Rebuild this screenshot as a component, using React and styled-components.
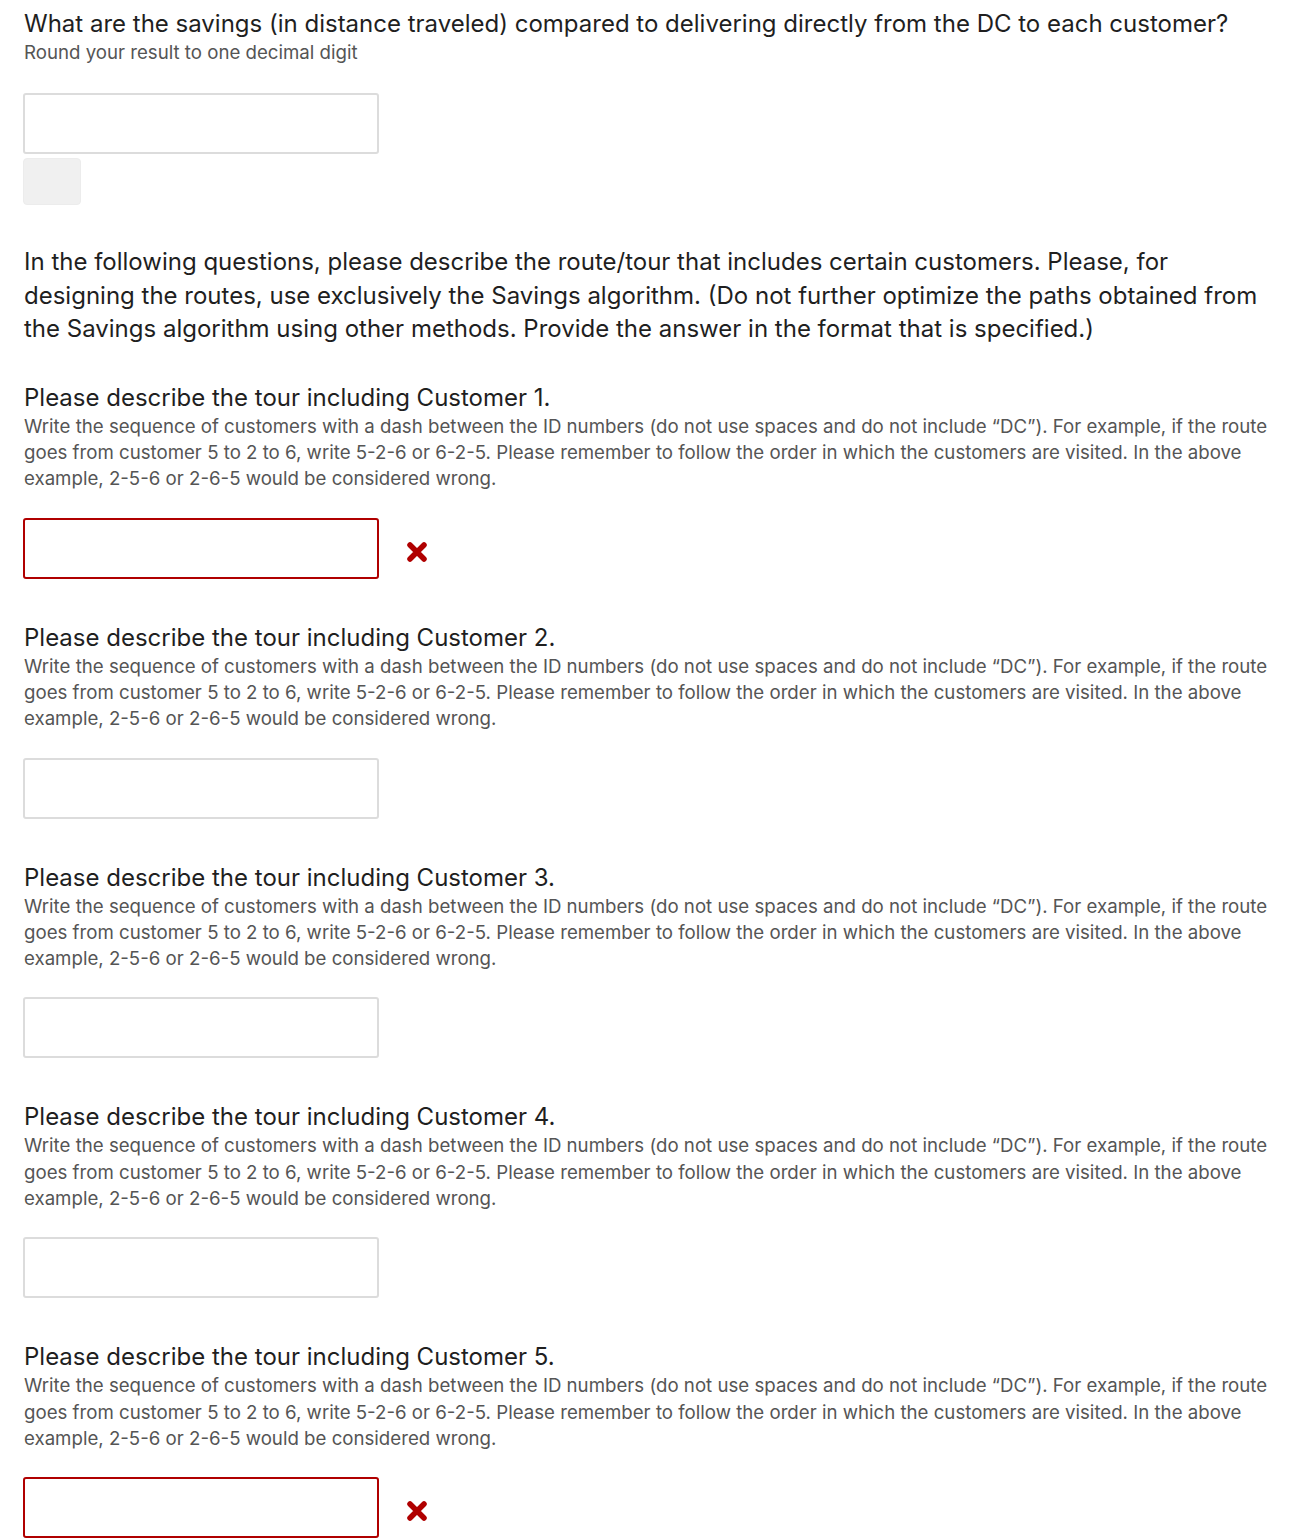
import React from "react";
import styled, { createGlobalStyle } from "styled-components";

const Global = createGlobalStyle`
  body {
    margin: 0;
    background: #fff;
    font-family: Inter, "Noto Sans", sans-serif;
  }
`;

const Page = styled.div`
  padding: 8px 24px 0 24px;
  width: 1248px;
  display: flex;
  flex-direction: column;
`;

const Question = styled.section`
  display: flex;
  flex-direction: column;
  margin-top: ${(p) => p.$top || 0}px;
`;

const Heading = styled.div`
  font-size: 24px;
  line-height: 32px;
  color: #1f1f1f;
`;

const Hint = styled.div`
  font-size: 18.67px;
  line-height: 26.3px;
  color: #555;
`;

const Intro = styled.p`
  margin: 38px 0 0;
  font-size: 24px;
  line-height: 33.5px;
  color: #1f1f1f;
`;

const AnswerRow = styled.div`
  display: flex;
  align-items: center;
  gap: 28px;
  margin-top: ${(p) => p.$top || 25}px;
  margin-left: -1px;
`;

const Field = styled.input`
  box-sizing: border-box;
  width: 356px;
  height: 61px;
  border-radius: 3px;
  border: 2px solid ${(p) => (p.$wrong ? "#b00000" : "#dcdcdc")};
  background: #fff;
  outline: none;
  font: inherit;
  font-size: 18px;
  padding: 0 12px;
`;

const CheckButton = styled.button`
  width: 58px;
  height: 47px;
  margin: 4px 0 0 -1px;
  border: 1px solid #ececec;
  border-radius: 4px;
  background: #f0f0f0;
`;

const WrongMark = styled.svg`
  width: 20px;
  height: 20px;
  flex: none;
  margin-top: 7px;
`;

const Cross = () => (
  <WrongMark viewBox="0 0 20 20">
    <path
      d="M3 3 L17 17 M17 3 L3 17"
      stroke="#b00000"
      strokeWidth="5.5"
      strokeLinecap="round"
      fill="none"
    />
  </WrongMark>
);

const hint =
  "Write the sequence of customers with a dash between the ID numbers (do not use spaces and do not include \u201CDC\u201D). For example, if the route goes from customer 5 to 2 to 6, write 5-2-6 or 6-2-5. Please remember to follow the order in which the customers are visited. In the above example, 2-5-6 or 2-6-5 would be considered wrong.";

const tours = [
  { id: 1, wrong: true },
  { id: 2, wrong: false },
  { id: 3, wrong: false },
  { id: 4, wrong: false },
  { id: 5, wrong: true },
];

export default function App() {
  return (
    <Page>
      <Global />
      <Question>
        <Heading>
          What are the savings (in distance traveled) compared to delivering
          directly from the DC to each customer?
        </Heading>
        <Hint>Round your result to one decimal digit</Hint>
        <AnswerRow $top={27}>
          <Field type="text" />
        </AnswerRow>
        <div>
          <CheckButton type="button" />
        </div>
      </Question>
      <Intro>
        In the following questions, please describe the route/tour that
        includes certain customers. Please, for designing the routes, use
        exclusively the Savings algorithm. (Do not further optimize the paths
        obtained from the Savings algorithm using other methods. Provide the
        answer in the format that is specified.)
      </Intro>
      {tours.map((t, i) => (
        <Question key={t.id} $top={i === 0 ? 36 : 43}>
          <Heading>Please describe the tour including Customer {t.id}.</Heading>
          <Hint>{hint}</Hint>
          <AnswerRow>
            <Field type="text" $wrong={t.wrong} />
            {t.wrong && <Cross />}
          </AnswerRow>
        </Question>
      ))}
    </Page>
  );
}
